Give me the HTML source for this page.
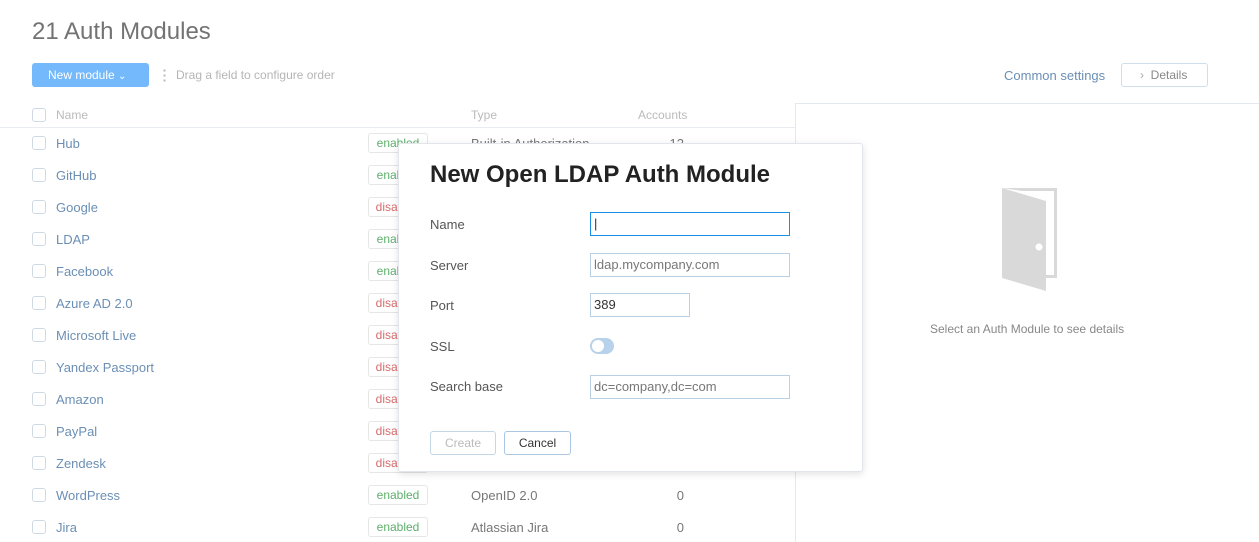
<!DOCTYPE html>
<html><head><style>
*{box-sizing:border-box;margin:0;padding:0}
body{width:1259px;height:542px;overflow:hidden;background:#fff;font-family:"Liberation Sans",sans-serif;position:relative;color:#333}
.a{position:absolute}
h1{position:absolute;left:32px;top:18px;font-size:24px;font-weight:normal;color:#737373}
.btn{left:32px;top:63px;width:117px;height:24px;border-radius:3px;background:#73b9fb;color:#fff;font-size:12px;line-height:24px;padding-left:16px}
.cb{position:absolute;left:32px;width:14px;height:14px;border:1px solid #cfd9e4;border-radius:3px}
.nm{position:absolute;left:56px;font-size:13px;color:#6b8fb5}
.bd{position:absolute;left:368px;width:60px;height:20px;border:1px solid #e6e6e6;border-radius:3px;font-size:12px;line-height:18px;text-align:center}
.en{color:#5dae6c}.di{color:#d86c6c}
.tp{position:absolute;left:471px;font-size:13px;color:#777}
.ac{position:absolute;left:640px;width:44px;text-align:right;font-size:13px;color:#777}
.lbl{position:absolute;left:31px;font-size:13px;color:#555}
.inp{position:absolute;left:191px;width:200px;height:24px;border:1px solid #b9d0e4;font-size:13px;color:#777;padding-left:3px;line-height:22px}
</style></head><body>
<h1>21 Auth Modules</h1>
<div class="a btn">New module <span style="font-size:10px">&#8964;</span></div>
<div class="a" style="left:163px;top:68px;width:3px;height:14px;background:radial-gradient(circle,#bbb 1px,transparent 1.3px) 0 0/3px 5px"></div>
<div class="a" style="left:176px;top:68px;font-size:12px;color:#b5b5b5">Drag a field to configure order</div>
<div class="a" style="left:1004px;top:68px;font-size:13px;color:#6b8fb5">Common settings</div>
<div class="a" style="left:1121px;top:63px;width:87px;height:24px;border:1px solid #cfdeea;border-radius:3px;font-size:12px;color:#888;line-height:22px;padding-left:18px"><span style="color:#aaa">&#8250;</span>&nbsp; Details</div>
<div class="cb" style="top:108px"></div>
<div class="a" style="left:56px;top:108px;font-size:12px;color:#bbb">Name</div>
<div class="a" style="left:471px;top:108px;font-size:12px;color:#bbb">Type</div>
<div class="a" style="left:638px;top:108px;font-size:12px;color:#bbb">Accounts</div>
<div class="a" style="left:0;top:127px;width:795px;height:1px;background:#e8ecf0"></div>
<div class="a" style="left:795px;top:103px;width:464px;height:1px;background:#e3e9ef"></div>
<div class="a" style="left:795px;top:103px;width:1px;height:439px;background:#e3e9ef"></div>
<div id="rows"></div>
<script>
var r=[["Hub",1,"Built-in Authorization","12"],["GitHub",1],["Google",0],["LDAP",1],["Facebook",1],["Azure AD 2.0",0],["Microsoft Live",0],["Yandex Passport",0],["Amazon",0],["PayPal",0],["Zendesk",0],["WordPress",1,"OpenID 2.0","0"],["Jira",1,"Atlassian Jira","0"]],h="";
r.forEach(function(x,i){var c=143+32*i;h+='<div class="cb" style="top:'+(c-7)+'px"></div><div class="nm" style="top:'+(c-7)+'px">'+x[0]+'</div><div class="bd '+(x[1]?'en':'di')+'" style="top:'+(c-10)+'px">'+(x[1]?'enabled':'disabled')+'</div>';if(x[2])h+='<div class="tp" style="top:'+(c-7)+'px">'+x[2]+'</div><div class="ac" style="top:'+(c-7)+'px">'+x[3]+'</div>';});
document.getElementById('rows').innerHTML=h;
</script>
<svg class="a" style="left:1002px;top:187px" width="56" height="104" viewBox="0 0 56 104"><path d="M0 1h55v90h-11v-3h8V4H20L0 1z" fill="#d9d9d9"/><path d="M0 1l44 13v90L0 91z" fill="#d9d9d9"/><circle cx="37" cy="60" r="3.5" fill="#fff"/></svg>
<div class="a" style="left:930px;top:322px;font-size:12px;color:#888">Select an Auth Module to see details</div>
<div class="a" style="left:398px;top:143px;width:465px;height:329px;background:#fff;border:1px solid #e2e6ea;border-radius:3px;box-shadow:0 2px 8px rgba(0,0,0,.12)">
<div class="a" style="left:31px;top:17px;font-size:24px;font-weight:bold;color:#222">New Open LDAP Auth Module</div>
<div class="lbl" style="top:73px">Name</div><div class="inp" style="top:68px;border-color:#1a8fe8;color:#333">|</div>
<div class="lbl" style="top:114px">Server</div><div class="inp" style="top:109px">ldap.mycompany.com</div>
<div class="lbl" style="top:154px">Port</div><div class="inp" style="top:149px;width:100px;color:#333">389</div>
<div class="lbl" style="top:195px">SSL</div><div class="a" style="left:191px;top:194px;width:24px;height:16px;border-radius:8px;background:#b7d2ea"><div class="a" style="left:2px;top:2px;width:12px;height:12px;border-radius:6px;background:#fff"></div></div>
<div class="lbl" style="top:235px">Search base</div><div class="inp" style="top:231px">dc=company,dc=com</div>
<div class="a" style="left:31px;top:287px;width:66px;height:24px;border:1px solid #c3d7e7;border-radius:3px;font-size:12px;color:#bbb;text-align:center;line-height:22px">Create</div>
<div class="a" style="left:105px;top:287px;width:67px;height:24px;border:1px solid #a9c7e2;border-radius:3px;font-size:12px;color:#333;text-align:center;line-height:22px">Cancel</div>
</div>
</body></html>
